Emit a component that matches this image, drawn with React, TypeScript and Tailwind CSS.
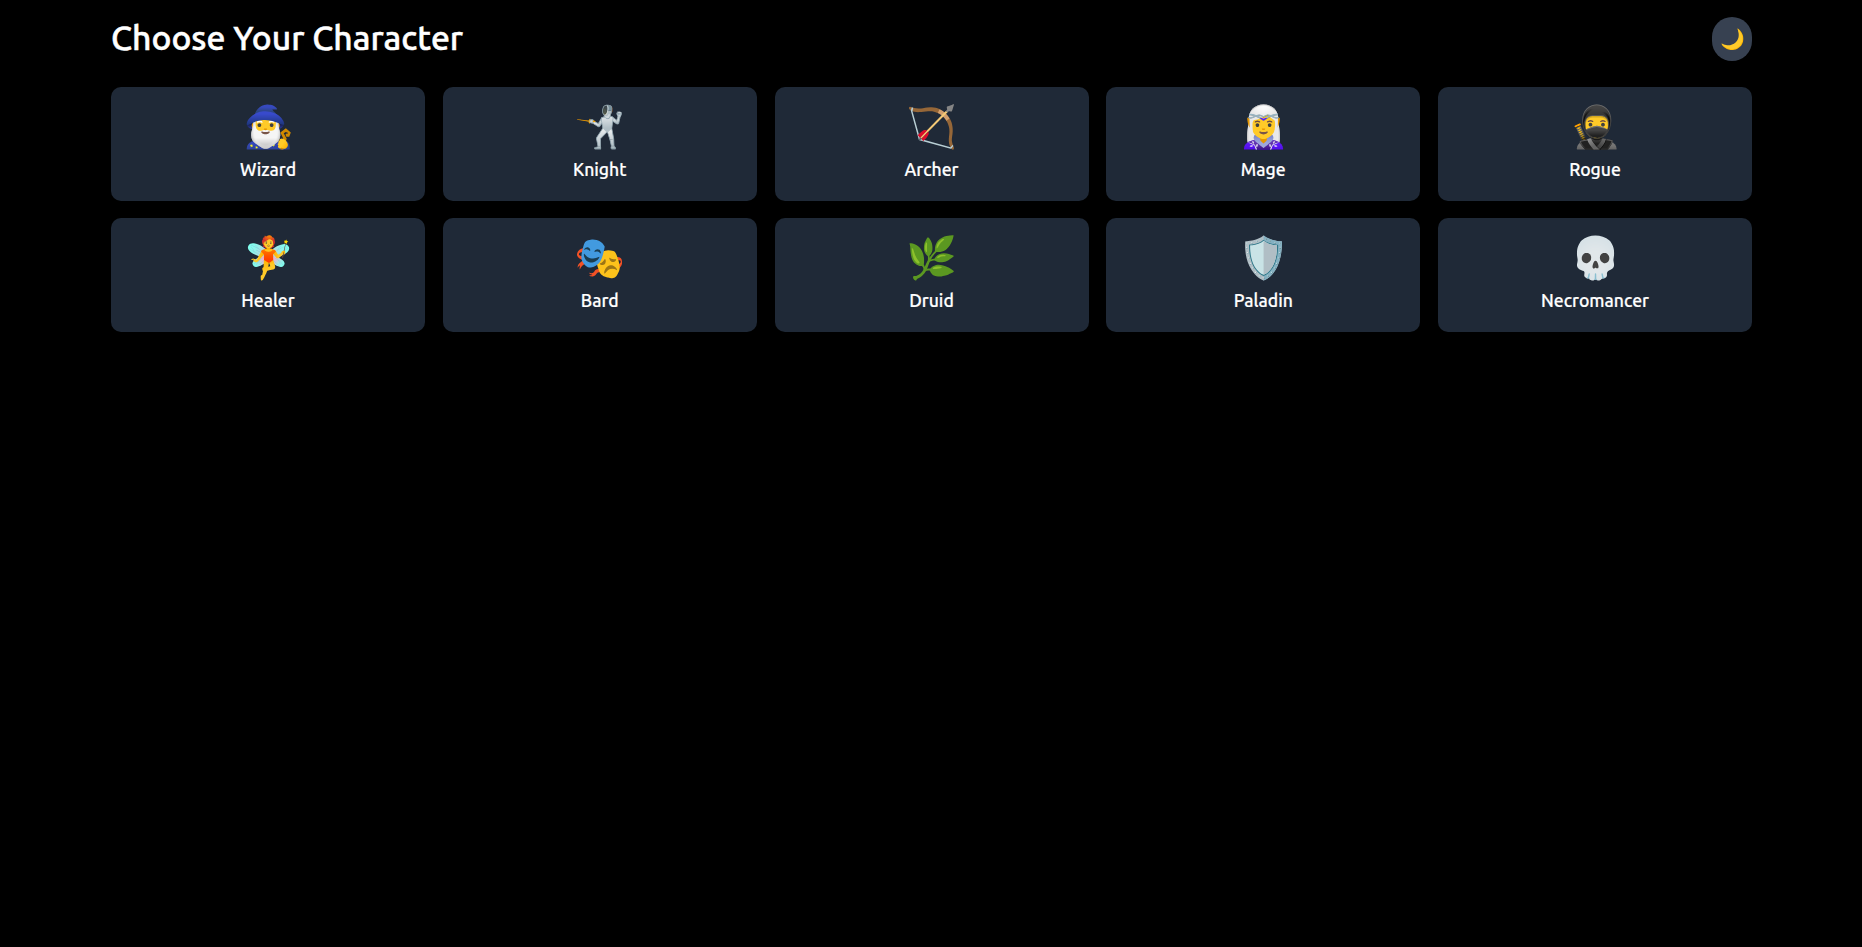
const items = [["🧙‍♂️","Wizard"],["🤺","Knight"],["🏹","Archer"],["🧝‍♀️","Mage"],["🥷","Rogue"],["🧚","Healer"],["🎭","Bard"],["🌿","Druid"],["🛡️","Paladin"],["💀","Necromancer"]];
export default function App() {
  return (
    <div className="min-h-screen bg-black pl-[111px] pr-[110px] pt-[17px] font-['Ubuntu','Noto_Sans',sans-serif] text-white">
      <div className="mb-[26px] flex items-center justify-between">
        <h1 className="-mt-0.5 text-[33.7px] font-medium leading-10 [-webkit-text-stroke:0.5px_white]">Choose Your Character</h1>
        <button className="h-11 w-10 rounded-full bg-[#374151] text-xl">🌙</button>
      </div>
      <div className="grid grid-cols-5 gap-x-[17.75px] gap-y-[17px]">
        {items.map(([e, n]) => (
          <div key={n} className="flex h-[114px] flex-col items-center rounded-[10px] bg-[#1f2937] pt-[15px]">
            <div className="text-[41px] leading-12">{e}</div>
            <div className="mt-2 text-[17.6px] font-medium leading-6 [-webkit-text-stroke:0.2px_white]">{n}</div>
          </div>
        ))}
      </div>
    </div>
  );
}
